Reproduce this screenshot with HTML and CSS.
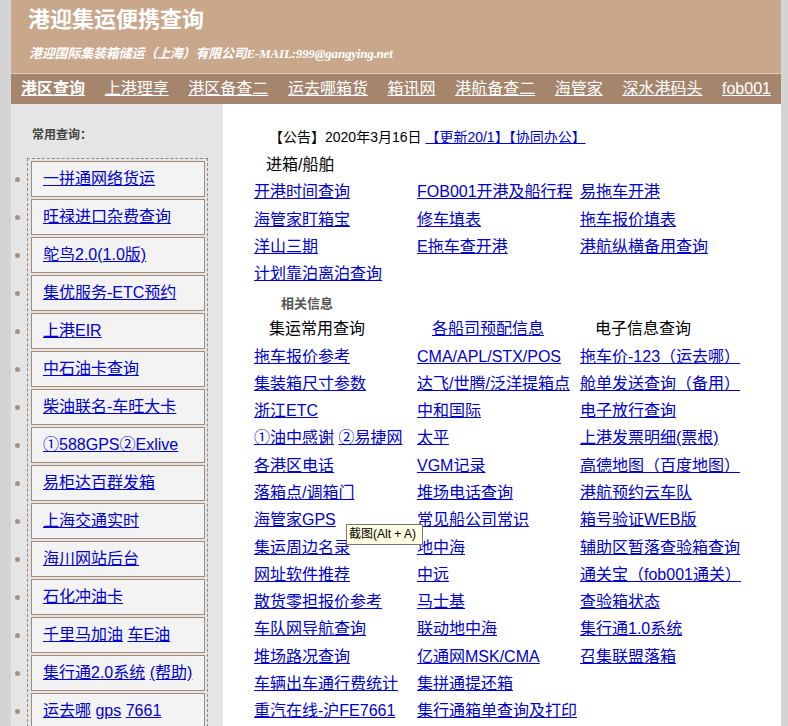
FILE: index.html
```html
<!DOCTYPE html>
<html lang="zh-CN">
<head>
<meta charset="utf-8">
<title>港迎集运便携查询</title>
<link rel="stylesheet" href="styles.css">
</head>
<body>
<div class="page">
  <header class="top">
    <h1 class="title">港迎集运便携查询</h1>
    <p class="company">港迎国际集装箱储运（上海）有限公司E-MAIL:999@gangying.net</p>
  </header>
  <nav class="nav">
    <a class="on" href="#">港区查询</a>
    <a href="#">上港理享</a>
    <a href="#">港区备查二</a>
    <a href="#">运去哪箱货</a>
    <a href="#">箱讯网</a>
    <a href="#">港航备查二</a>
    <a href="#">海管家</a>
    <a href="#">深水港码头</a>
    <a href="#">fob001</a>
  </nav>
  <div class="main">
    <aside class="side">
      <h3 class="side-title">常用查询：</h3>
      <ul class="quick">
        <li><a href="#">一拼通网络货运</a></li>
        <li><a href="#">旺禄进口杂费查询</a></li>
        <li><a href="#">鸵鸟2.0(1.0版)</a></li>
        <li><a href="#">集优服务-ETC预约</a></li>
        <li><a href="#">上港EIR</a></li>
        <li><a href="#">中石油卡查询</a></li>
        <li><a href="#">柴油联名-车旺大卡</a></li>
        <li><a href="#">①588GPS②Exlive</a></li>
        <li><a href="#">易柜达百群发箱</a></li>
        <li><a href="#">上海交通实时</a></li>
        <li><a href="#">海川网站后台</a></li>
        <li><a href="#">石化冲油卡</a></li>
        <li><a href="#">千里马加油</a> <a href="#">车E油</a></li>
        <li><a href="#">集行通2.0系统</a> <a href="#">(帮助)</a></li>
        <li><a href="#">运去哪</a> <a href="#">gps</a> <a href="#">7661</a></li>
      </ul>
    </aside>
    <section class="content">
      <div class="notice">【公告】2020年3月16日 <a href="#">【更新20/1】【协同办公】</a></div>
      <div class="sec">进箱/船舶</div>
      <div class="grid">
        <a href="#">开港时间查询</a><a href="#">FOB001开港及船行程</a><a href="#">易拖车开港</a>
        <a href="#">海管家盯箱宝</a><a href="#">修车填表</a><a href="#">拖车报价填表</a>
        <a href="#">洋山三期</a><a href="#">E拖车查开港</a><a href="#">港航纵横备用查询</a>
        <a href="#">计划靠泊离泊查询</a><span></span><span></span>
      </div>
      <div class="rel">相关信息</div>
      <div class="grid heads">
        <span>集运常用查询</span><a href="#">各船司预配信息</a><span>电子信息查询</span>
      </div>
      <div class="grid">
        <a href="#">拖车报价参考</a><a href="#">CMA/APL/STX/POS</a><a href="#">拖车价-123（运去哪）</a>
        <a href="#">集装箱尺寸参数</a><a href="#">达飞/世腾/泛洋提箱点</a><a href="#">舱单发送查询（备用）</a>
        <a href="#">浙江ETC</a><a href="#">中和国际</a><a href="#">电子放行查询</a>
        <span><a href="#">①油中感谢</a> <a href="#">②易捷网</a></span><a href="#">太平</a><a href="#">上港发票明细(票根)</a>
        <a href="#">各港区电话</a><a href="#">VGM记录</a><a href="#">高德地图（百度地图）</a>
        <a href="#">落箱点/调箱门</a><a href="#">堆场电话查询</a><a href="#">港航预约云车队</a>
        <a href="#">海管家GPS</a><a href="#">常见船公司常识</a><a href="#">箱号验证WEB版</a>
        <a href="#">集运周边名录</a><a href="#">地中海</a><a href="#">辅助区暂落查验箱查询</a>
        <a href="#">网址软件推荐</a><a href="#">中远</a><a href="#">通关宝（fob001通关）</a>
        <a href="#">散货零担报价参考</a><a href="#">马士基</a><a href="#">查验箱状态</a>
        <a href="#">车队网导航查询</a><a href="#">联动地中海</a><a href="#">集行通1.0系统</a>
        <a href="#">堆场路况查询</a><a href="#">亿通网MSK/CMA</a><a href="#">召集联盟落箱</a>
        <a href="#">车辆出车通行费统计</a><a href="#">集拼通提还箱</a><span></span>
        <a href="#">重汽在线-沪FE7661</a><a href="#">集行通箱单查询及打印</a><span></span>
      </div>
    </section>
  </div>
</div>
<div class="tip">截图(Alt + A)</div>
</body>
</html>
```
FILE: styles.css
```css
html, body {
  overflow: hidden;
}
body {
  margin: 0;
  background: #d4d4d4;
  font-family: "Liberation Sans", "Noto Sans CJK SC", sans-serif;
  color: #000;
}
a {
  color: #0000cc;
}
.page {
  width: 770px;
  margin-left: 11px;
  background: #fff;
  min-height: 726px;
}
.top {
  box-sizing: border-box;
  height: 74px;
  background: #c9a78b;
  border-bottom: 1px solid #dccab9;
  padding: 7px 18px 0;
}
.title {
  margin: 0 0 0 -1px;
  font-size: 22px;
  line-height: 26px;
  font-weight: bold;
  color: #fff;
}
.company {
  margin: 13px 0 0;
  font: italic bold 13px/16px "Liberation Serif", "Noto Sans CJK SC", serif;
  letter-spacing: -0.2px;
  color: #fff;
}
.nav {
  height: 30px;
  background: #a6856d;
  display: flex;
  justify-content: space-between;
  align-items: center;
  padding: 0 10px;
}
.nav a {
  color: #fff;
  font-size: 16px;
  line-height: 20px;
}
.nav a.on {
  font-weight: bold;
}
.main {
  display: flex;
  align-items: stretch;
}
.side {
  box-sizing: border-box;
  width: 212px;
  flex: none;
  background: #e5e5e5;
  padding-top: 23px;
  min-height: 622px;
}
.side-title {
  margin: 0 0 15px 21px;
  font-size: 12px;
  line-height: 16px;
  color: #444;
  font-weight: bold;
}
.quick {
  box-sizing: border-box;
  width: 181px;
  margin: 0 0 0 16px;
  padding: 2px 2px 0 3px;
  border: 1px dashed #8a8a8a;
  list-style: disc outside;
}
.quick li {
  box-sizing: border-box;
  height: 36px;
  margin-bottom: 2px;
  border: 1px solid #a38b77;
  background: #f3f3f3;
  padding-left: 11px;
  font-size: 16px;
  line-height: 34px;
  white-space: nowrap;
}
.quick li::marker {
  color: #a8927f;
}
.content {
  flex: 1;
  padding: 20.2px 0 0 31px;
}
.notice {
  height: 27.3px;
  line-height: 27.3px;
  font-size: 14px;
  padding-left: 15px;
  white-space: nowrap;
}
.sec {
  height: 27.3px;
  line-height: 27.3px;
  font-size: 16px;
  padding-left: 12px;
}
.grid {
  display: grid;
  grid-template-columns: 163px 163px 163px;
  grid-auto-rows: 27.3px;
  align-items: center;
  font-size: 16px;
  line-height: 20px;
  white-space: nowrap;
}
.heads > * {
  margin-left: 15px;
}
.rel {
  padding: 2.6px 0 0 27px;
  height: 25px;
  line-height: 25px;
  font-size: 13px;
  font-weight: bold;
  color: #555;
}
.tip {
  position: absolute;
  left: 346px;
  top: 524px;
  box-sizing: border-box;
  width: 77px;
  height: 21px;
  padding: 0 2px;
  background: #ffffe1;
  border: 1px solid #767676;
  font-size: 12px;
  line-height: 19px;
  white-space: nowrap;
  color: #000;
}
```
